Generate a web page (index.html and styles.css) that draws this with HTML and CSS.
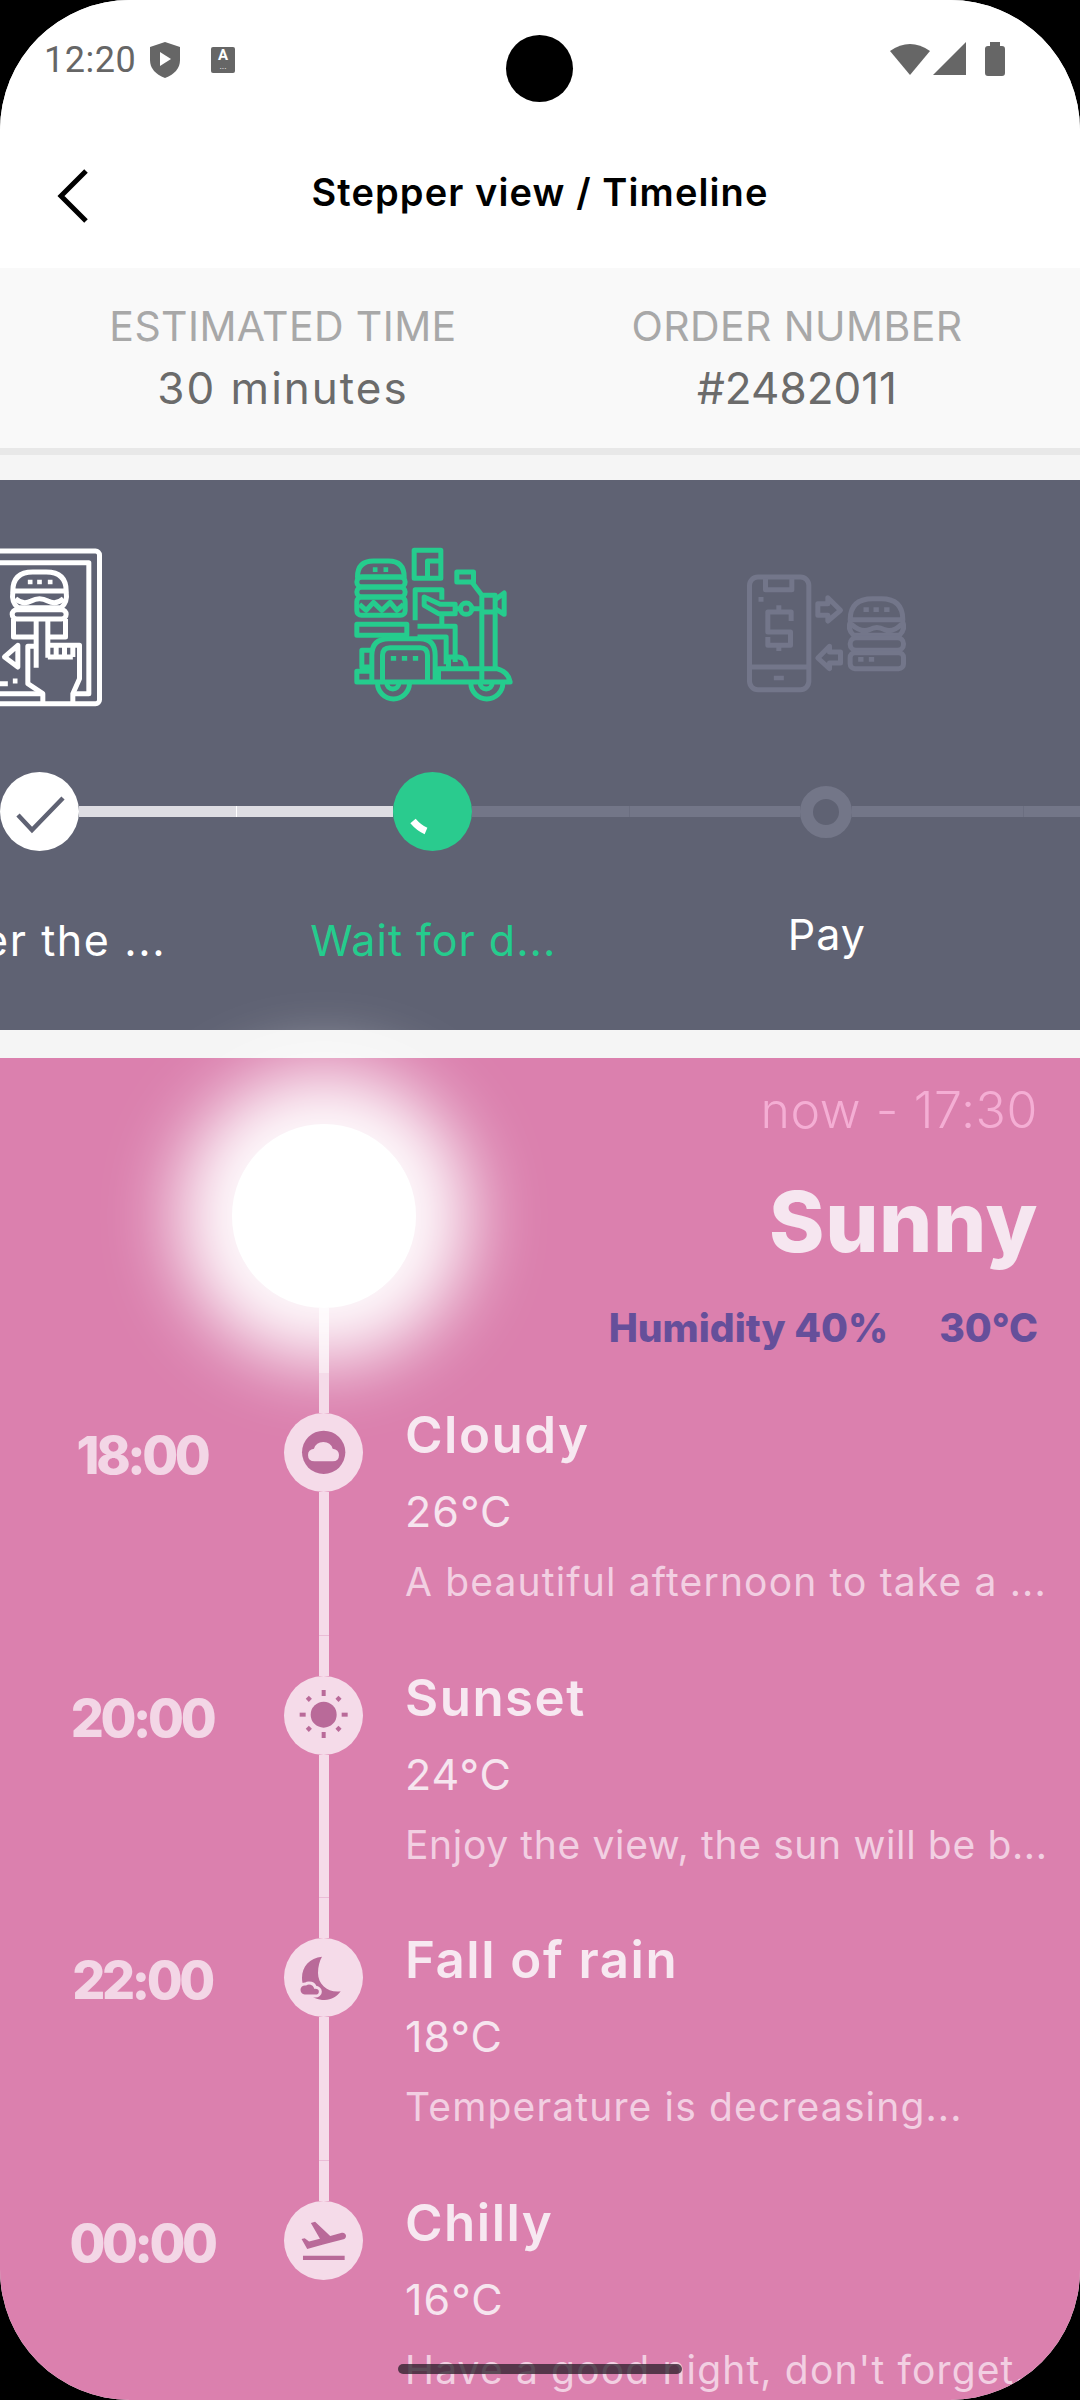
FILE: index.html
```html
<!DOCTYPE html>
<html lang="en">
<head>
  <meta charset="UTF-8" />
  <title>Stepper view / Timeline</title>
  <link rel="stylesheet" href="styles.css">
</head>
<body>
<div class="screen">

  <div class="camera"></div>

  <div class="statusbar">
    <span class="clock">12:20</span>
    <svg class="shield" viewBox="0 0 30 36"><path d="M15 0 L30 5 V18 Q30 30 15 36 Q0 30 0 18 V5 Z" fill="#666"/><path d="M10 10 L21 17 L10 24 Z" fill="#fff"/></svg>
    <span class="keyboard"><b>A</b><i>...</i></span>
    <svg class="sysicons" viewBox="0 0 116 36"><path d="M1 9 Q21 -5 41 9 L21 33 Z" fill="#666"/><path d="M77 0 V33 H44 Z" fill="#666"/><path d="M101 0 H111 V4 H113 Q116 4 116 7 V31 Q116 34 113 34 H99 Q96 34 96 31 V7 Q96 4 99 4 H101 Z" fill="#666"/></svg>
  </div>

  <div class="appbar">
    <svg class="back" viewBox="0 0 36 56"><path d="M31 3 L6 28 L31 53" fill="none" stroke="#000" stroke-width="5"/></svg>
    <h1>Stepper view / Timeline</h1>
  </div>

  <div class="order-info">
    <div>
      <div class="info-label">ESTIMATED TIME</div>
      <div class="info-value info-value-wide">30 minutes</div>
    </div>
    <div>
      <div class="info-label">ORDER NUMBER</div>
      <div class="info-value">#2482011</div>
    </div>
  </div>

  <div class="stepper">
    <div class="step step-done">
      <svg class="step-icon" viewBox="-130 50 500 480" fill="none" stroke="#fff" stroke-width="15" stroke-linejoin="round">
        <rect x="-115" y="62" width="415" height="458" rx="12"/>
        <path d="M-115 97 H268 V490 H225"/>
        <path d="M40 182 Q40 125 100 125 H140 Q200 125 200 182 Z"/>
        <path d="M85 155 h14 M113 155 h14 M145 155 h14" stroke-width="14"/>
        <path d="M40 185 Q35 215 55 232 H185 Q205 215 200 185"/>
        <path d="M48 205 Q70 225 95 212 Q120 198 145 212 Q170 225 192 205"/>
        <rect x="38" y="238" width="162" height="28" rx="14"/>
        <path d="M42 266 V320 H110 M145 320 H198 V266"/>
        <path d="M110 270 V412 M145 270 V382"/>
        <path d="M110 348 H85 V460 L130 490 V520 M145 345 H240 V445 L220 490 V520"/>
        <path d="M170 345 V380 M195 345 V380 M220 345 V380 M145 380 H220"/>
        <path d="M55 345 L15 380 L55 410 Z"/>
        <path d="M-20 425 V460 H25 M40 452 h14"/>
        <path d="M-115 490 H130"/>
      </svg>
      <div class="step-track">
        <span class="line line-on"></span>
        <span class="dot dot-done">
          <svg viewBox="0 0 79 79"><path d="M18 43 L32 58 L63 26" fill="none" stroke="#5f6273" stroke-width="4.5"/></svg>
        </span>
        <span class="line line-on line-end"></span>
      </div>
      <div class="step-label">Enter the ...</div>
    </div>

    <div class="step step-active">
      <svg class="step-icon" viewBox="30 20 500 480" fill="none" stroke="#25cc8d" stroke-width="15" stroke-linejoin="round">
        <path d="M52 110 Q52 62 100 62 H145 Q192 62 192 110 Z"/>
        <path d="M98 88 h14 M130 88 h14" stroke-width="14"/>
        <rect x="50" y="110" width="145" height="30" rx="15"/>
        <rect x="50" y="140" width="145" height="30" rx="15"/>
        <rect x="50" y="170" width="145" height="55" rx="14"/>
        <path d="M58 192 L78 210 L100 186 L125 210 L150 186 L170 210 L190 192"/>
        <rect x="222" y="30" width="80" height="84"/>
        <path d="M302 62 H262 V114"/>
        <path d="M225 240 V148 H305 V178"/>
        <path d="M252 170 L300 192 H345 V220 H295 L252 195 Z"/>
        <path d="M305 220 V258 M232 258 H345 V365 M232 290 H318 V372"/>
        <circle cx="378" cy="205" r="17"/>
        <path d="M345 205 H361 M395 205 H425"/>
        <rect x="350" y="95" width="50" height="30"/>
        <path d="M395 125 L425 165 M425 165 H465 V215 H425 Z M425 215 V425 M465 215 V385"/>
        <path d="M465 178 L492 158 V222 L465 205"/>
        <rect x="50" y="252" width="150" height="33"/>
        <path d="M95 425 V345 Q95 295 145 295 H240 Q285 295 285 345 V425"/>
        <path d="M127 425 V345 Q127 322 150 322 H240 Q262 322 262 345 V425"/>
        <path d="M152 354 h16 M185 354 h16 M218 354 h16" stroke-width="14"/>
        <path d="M95 330 H65 V380 H95 M95 393 H50 V425 H510 Q505 395 470 385 H295 V425"/>
        <path d="M325 380 V350 H355 Q378 352 378 380"/>
        <path d="M112 428 A48 48 0 0 0 208 428 M392 428 A48 48 0 0 0 488 428"/>
        <path d="M140 428 A18 18 0 0 0 176 428 M420 428 A18 18 0 0 0 456 428"/>
      </svg>
      <div class="step-track">
        <span class="line line-on"></span>
        <span class="dot dot-active">
          <svg viewBox="0 0 79 79"><path d="M20 49 Q26 56 33 59" fill="none" stroke="#fff" stroke-width="7"/></svg>
        </span>
        <span class="line line-end"></span>
      </div>
      <div class="step-label">Wait for d...</div>
    </div>

    <div class="step step-next">
      <svg class="step-icon" viewBox="41 -40 500 480" fill="none" stroke="#73768a" stroke-width="15" stroke-linejoin="round">
        <rect x="60" y="50" width="178" height="338" rx="25"/>
        <path d="M108 54 V88 H187 V54 M60 320 H238"/>
        <path d="M133 353 h30 M87 117 h15" stroke-width="14"/>
        <path d="M185 182 V155 H115 V215 H183 V255 H115 V230 M148 135 V155 M148 255 V272"/>
        <path d="M265 130 H295 V112 L333 150 L295 182 V165 H265 Z"/>
        <path d="M333 275 H300 V258 L265 293 L300 325 V308 H333 Z"/>
        <path d="M362 178 Q362 115 430 115 H455 Q520 115 520 178 Z"/>
        <path d="M402 148 h16 M432 148 h16 M464 148 h16" stroke-width="14"/>
        <path d="M364 180 Q352 205 372 225 H510 Q530 205 518 180 M366 192 Q395 218 420 208 Q442 195 465 208 Q490 218 516 192"/>
        <rect x="362" y="232" width="160" height="38" rx="18"/>
        <rect x="362" y="277" width="160" height="48" rx="14"/>
        <path d="M386 297 h16 M418 297 h16" stroke-width="14"/>
      </svg>
      <div class="step-track">
        <span class="line"></span>
        <span class="dot dot-next"></span>
        <span class="line line-end"></span>
      </div>
      <div class="step-label step-label-pay">Pay</div>
    </div>

    <div class="step step-next">
      <div class="step-track step-track-only">
        <span class="line"></span>
      </div>
    </div>
  </div>

  <div class="weather">
    <div class="now">
      <div class="sun-col">
        <div class="sun"></div>
        <div class="rail-line"></div>
      </div>
      <div class="now-text">
        <div class="now-time">now - 17:30</div>
        <div class="now-title">Sunny</div>
        <div class="now-meta"><span>Humidity 40%</span><span>30°C</span></div>
      </div>
    </div>

    <div class="hour">
      <div class="hour-time">18:00</div>
      <div class="rail">
        <div class="rail-top"></div>
        <div class="rail-dot">
          <svg viewBox="43 35 237 237"><circle cx="162" cy="153" r="65" fill="#b96a99"/><path d="M135 180 Q115 180 115 161 Q115 144 133 142 Q139 122 161 122 Q183 122 189 142 Q208 145 208 161 Q208 180 189 180 Z" fill="#f5dbe9"/></svg>
        </div>
        <div class="rail-bottom"></div>
      </div>
      <div class="hour-body">
        <div class="hour-title">Cloudy</div>
        <div class="hour-temp">26°C</div>
        <div class="hour-desc">A beautiful afternoon to take a ...</div>
      </div>
    </div>

    <div class="hour">
      <div class="hour-time">20:00</div>
      <div class="rail">
        <div class="rail-top"></div>
        <div class="rail-dot">
          <svg viewBox="43 47 237 237" fill="#b96a99">
            <circle cx="162" cy="163" r="39"/>
            <rect x="156" y="89" width="12" height="18"/><rect x="156" y="215" width="12" height="18"/>
            <rect x="90" y="157" width="18" height="12"/><rect x="216" y="157" width="18" height="12"/>
            <rect x="111" y="109" width="13" height="13" transform="rotate(45 117.5 115.5)"/>
            <rect x="200" y="109" width="13" height="13" transform="rotate(45 206.5 115.5)"/>
            <rect x="111" y="199" width="13" height="13" transform="rotate(45 117.5 205.5)"/>
            <rect x="200" y="199" width="13" height="13" transform="rotate(45 206.5 205.5)"/>
          </svg>
        </div>
        <div class="rail-bottom"></div>
      </div>
      <div class="hour-body">
        <div class="hour-title">Sunset</div>
        <div class="hour-temp">24°C</div>
        <div class="hour-desc hour-desc-tight">Enjoy the view, the sun will be b...</div>
      </div>
    </div>

    <div class="hour">
      <div class="hour-time">22:00</div>
      <div class="rail">
        <div class="rail-top"></div>
        <div class="rail-dot">
          <svg viewBox="43 50 237 237">
            <path d="M157 106 C120 110 97 135 97 170 C97 205 125 236 165 236 C185 236 203 225 213 210 C175 215 145 190 145 155 C145 135 150 118 157 106 Z" fill="#b96a99"/>
            <path d="M105 224 C94 224 88 214 88 205 C88 194 97 187 108 188 C117 181 134 186 137 198 C147 198 152 205 152 211 C152 219 145 224 137 224 Z" fill="#b96a99" stroke="#f5dbe9" stroke-width="9"/>
          </svg>
        </div>
        <div class="rail-bottom"></div>
      </div>
      <div class="hour-body">
        <div class="hour-title">Fall of rain</div>
        <div class="hour-temp">18°C</div>
        <div class="hour-desc">Temperature is decreasing...</div>
      </div>
    </div>

    <div class="hour">
      <div class="hour-time">00:00</div>
      <div class="rail">
        <div class="rail-top"></div>
        <div class="rail-dot">
          <svg viewBox="43 47 237 237"><path transform="translate(83.5 86) scale(6.58)" fill="#b96a99" d="M2.5 19h19v2h-19zm19.57-9.36c-.21-.8-1.04-1.28-1.84-1.06L14.92 10l-6.9-6.43-1.93.51 4.14 7.17-4.97 1.33-1.97-1.54-1.45.39 1.82 3.16.77 1.33 1.6-.43 5.31-1.42 4.35-1.16L21 11.49c.81-.23 1.28-1.05 1.07-1.85z"/></svg>
        </div>
      </div>
      <div class="hour-body">
        <div class="hour-title">Chilly</div>
        <div class="hour-temp">16°C</div>
        <div class="hour-desc">Have a good night, don't forget...</div>
      </div>
    </div>
  </div>

  <div class="gesture"></div>
</div>
</body>
</html>
```

FILE: styles.css
```css
html, body {
  margin: 0;
  padding: 0;
  background: #000;
  font-family: Inter, "Noto Sans", sans-serif;
}
.screen {
  position: relative;
  width: 1080px;
  height: 2400px;
  overflow: hidden;
  border-radius: 130px;
  background: #f5f5f5;
}
.camera {
  position: absolute;
  top: 35px;
  left: 506px;
  width: 67px;
  height: 67px;
  border-radius: 50%;
  background: #000;
}
.gesture {
  position: absolute;
  left: 398px;
  top: 2364px;
  width: 284px;
  height: 10px;
  border-radius: 5px;
  background: rgba(40, 30, 40, 0.75);
}

/* status bar */
.statusbar {
  display: flex;
  align-items: center;
  height: 120px;
  padding: 0 75px 0 44px;
  box-sizing: border-box;
  background: #fff;
  color: #666;
}
.clock {
  font-family: Roboto, sans-serif;
  font-size: 36px;
  letter-spacing: 0.5px;
  width: 106px;
}
.shield {
  width: 30px;
  height: 36px;
}
.keyboard {
  display: flex;
  flex-direction: column;
  align-items: center;
  width: 24px;
  height: 26px;
  margin-left: 31px;
  border-radius: 2px;
  background: #666;
  color: #fff;
  font-family: Roboto, sans-serif;
  line-height: 1;
}
.keyboard b {
  font-size: 15px;
  line-height: 16px;
}
.keyboard i {
  font-style: normal;
  font-size: 9px;
  line-height: 6px;
}
.sysicons {
  width: 116px;
  height: 36px;
  margin-left: auto;
}

/* app bar */
.appbar {
  position: relative;
  height: 148px;
  background: #fff;
}
.appbar h1 {
  margin: 0;
  padding-top: 50px;
  font-size: 38px;
  line-height: 44px;
  font-weight: 600;
  letter-spacing: 1.1px;
  text-align: center;
  color: #000;
}
.back {
  position: absolute;
  left: 55px;
  top: 48px;
  width: 36px;
  height: 56px;
}

/* estimated time / order number */
.order-info {
  display: grid;
  grid-template-columns: 566px 462px;
  height: 180px;
  background: #f9f9f9;
  border-bottom: 7px solid #e8e8e8;
  text-align: center;
}
.info-label {
  margin-top: 33px;
  font-size: 41px;
  line-height: 50px;
  letter-spacing: 0.4px;
  color: #a8a8a8;
}
.info-value {
  margin-top: 12px;
  font-size: 44px;
  line-height: 50px;
  color: #6b6b6b;
}
.info-value-wide {
  letter-spacing: 2px;
}

/* stepper */
.stepper {
  display: flex;
  height: 550px;
  margin-top: 25px;
  overflow: hidden;
  background: #5f6273;
}
.step {
  flex: 0 0 393.5px;
  display: flex;
  flex-direction: column;
  align-items: center;
}
.step:first-child {
  margin-left: -157px;
}
.step-icon {
  display: block;
  flex: none;
  width: 167px;
  height: 160px;
  margin-top: 67px;
}
.step-track {
  display: flex;
  align-items: center;
  align-self: stretch;
  height: 79px;
  margin-top: 65px;
}
.step-track-only {
  margin-top: 292px;
}
.line {
  flex: 1;
  height: 11px;
  background: #737688;
}
.line-on {
  background: #dedde3;
}
.line-end {
  border-right: 1px solid #6b6e80;
}
.line-on.line-end {
  border-right-color: #fff;
}
.dot {
  flex: none;
  width: 79px;
  height: 79px;
  border-radius: 50%;
}
.dot svg {
  display: block;
}
.dot-done {
  background: #fff;
}
.dot-active {
  background: #2acb8e;
}
.dot-next {
  box-sizing: border-box;
  width: 52px;
  height: 52px;
  border: 13px solid #737688;
}
.step-label {
  margin-top: 61px;
  font-size: 43px;
  line-height: 56px;
  letter-spacing: 1px;
  white-space: nowrap;
  color: #fff;
}
.step-done .step-label {
  letter-spacing: 1.6px;
}
.step-active .step-label {
  color: #25cc8d;
}
.step-label-pay {
  margin-top: 55px;
}

/* weather timeline */
.weather {
  margin-top: 28px;
  padding-bottom: 20px;
  background: #db80ae;
}
.now {
  display: flex;
  height: 315px;
}
.sun-col {
  display: flex;
  flex-direction: column;
  align-items: center;
  flex: none;
  width: 184px;
  margin-left: 232px;
  padding-top: 66px;
  box-sizing: border-box;
}
.sun {
  flex: none;
  width: 184px;
  height: 184px;
  border-radius: 50%;
  background: #fff;
  box-shadow: 0 0 72px 55px rgba(255, 255, 255, 0.97);
}
.rail-line {
  flex: 1;
  width: 10px;
  background: rgba(255, 255, 255, 0.72);
}
.now-text {
  flex: 1;
  padding-right: 42px;
  text-align: right;
}
.now-time {
  margin-top: 22px;
  font-size: 50px;
  line-height: 60px;
  font-weight: 300;
  letter-spacing: 0.6px;
  color: #f4aed4;
}
.now-title {
  margin-top: 32px;
  font-size: 84px;
  line-height: 100px;
  font-weight: 800;
  letter-spacing: 0.6px;
  color: #f6e6f0;
}
.now-meta {
  display: flex;
  justify-content: flex-end;
  gap: 51px;
  margin-top: 31px;
  font-size: 39px;
  line-height: 50px;
  font-weight: 800;
  color: #654f9a;
}
.hour {
  display: flex;
  height: 262.5px;
}
.hour-time {
  flex: none;
  width: 284px;
  margin-top: 51px;
  font-size: 52px;
  line-height: 64px;
  font-weight: 800;
  letter-spacing: -3.4px;
  text-align: center;
  color: #f3d6e6;
}
.rail {
  display: flex;
  flex-direction: column;
  align-items: center;
  flex: none;
  width: 79px;
}
.rail-top {
  flex: none;
  width: 10px;
  height: 40px;
  background: #f5dbe9;
}
.rail-dot {
  flex: none;
  width: 79px;
  height: 79px;
  border-radius: 50%;
  background: #f5dbe9;
}
.rail-dot svg {
  display: block;
}
.rail-bottom {
  flex: 1;
  width: 10px;
  background: #f5dbe9;
  border-bottom: 1px solid #eabcd6;
}
.hour-body {
  flex: 1;
  padding-left: 42px;
  min-width: 0;
}
.hour-title {
  margin-top: 32px;
  font-size: 51px;
  line-height: 60px;
  font-weight: 600;
  letter-spacing: 1.5px;
  color: #f7e8f1;
}
.hour-temp {
  margin-top: 19px;
  font-size: 43px;
  line-height: 54px;
  letter-spacing: 1px;
  color: #f6e5ef;
}
.hour-desc {
  margin-top: 19px;
  font-size: 39px;
  line-height: 50px;
  letter-spacing: 1.15px;
  white-space: nowrap;
  color: #f2cfe2;
}
.hour-desc-tight {
  letter-spacing: 0.65px;
}
```
